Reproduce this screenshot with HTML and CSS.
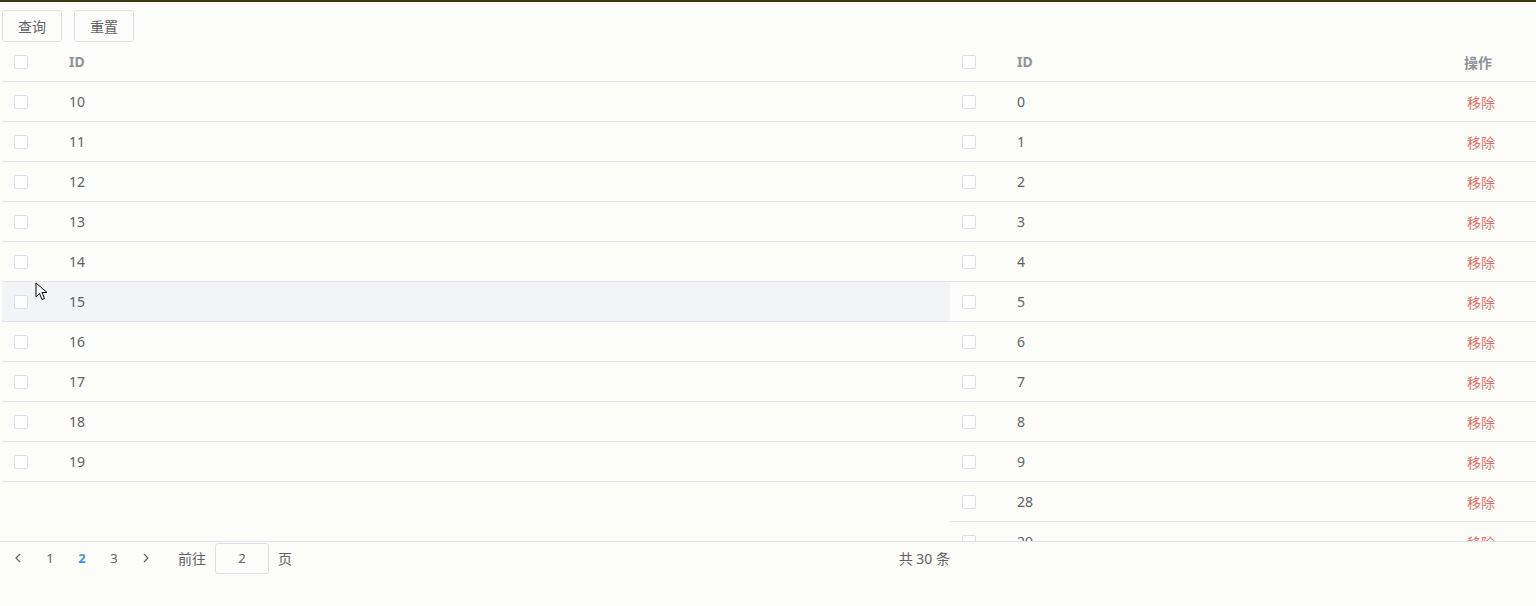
FILE: index.html
```html
<!DOCTYPE html>
<html lang="zh-CN">
<head>
    <meta charset="UTF-8">
    <meta name="viewport" content="width=device-width, initial-scale=1.0">
    <title>表格选择</title>
    <link rel="stylesheet" href="styles.css">
</head>
<body>
    <div class="toolbar">
        <button class="btn">查询</button>
        <button class="btn">重置</button>
    </div>

    <div class="panels">
        <!-- 左侧：分页数据 -->
        <div class="panel panel-left">
            <div class="row head">
                <div class="cell sel"><span class="checkbox"></span></div>
                <div class="cell id">ID</div>
            </div>
            <div class="row"><div class="cell sel"><span class="checkbox"></span></div><div class="cell id">10</div></div>
            <div class="row"><div class="cell sel"><span class="checkbox"></span></div><div class="cell id">11</div></div>
            <div class="row"><div class="cell sel"><span class="checkbox"></span></div><div class="cell id">12</div></div>
            <div class="row"><div class="cell sel"><span class="checkbox"></span></div><div class="cell id">13</div></div>
            <div class="row"><div class="cell sel"><span class="checkbox"></span></div><div class="cell id">14</div></div>
            <div class="row hover"><div class="cell sel"><span class="checkbox"></span></div><div class="cell id">15</div></div>
            <div class="row"><div class="cell sel"><span class="checkbox"></span></div><div class="cell id">16</div></div>
            <div class="row"><div class="cell sel"><span class="checkbox"></span></div><div class="cell id">17</div></div>
            <div class="row"><div class="cell sel"><span class="checkbox"></span></div><div class="cell id">18</div></div>
            <div class="row"><div class="cell sel"><span class="checkbox"></span></div><div class="cell id">19</div></div>

            <svg class="cursor" width="14" height="20" viewBox="0 0 14 20">
                <path d="M1 1 L1 15 L4.5 11.5 L7 17.5 L9.5 16.5 L7 10.5 L12 10.5 Z" fill="#fff" stroke="#000" stroke-width="1"/>
            </svg>
        </div>

        <!-- 右侧：已选数据 -->
        <div class="panel panel-right">
            <div class="row head">
                <div class="cell sel"><span class="checkbox"></span></div>
                <div class="cell id">ID</div>
                <div class="cell op">操作</div>
            </div>
            <div class="row"><div class="cell sel"><span class="checkbox"></span></div><div class="cell id">0</div><div class="cell op"><a class="remove">移除</a></div></div>
            <div class="row"><div class="cell sel"><span class="checkbox"></span></div><div class="cell id">1</div><div class="cell op"><a class="remove">移除</a></div></div>
            <div class="row"><div class="cell sel"><span class="checkbox"></span></div><div class="cell id">2</div><div class="cell op"><a class="remove">移除</a></div></div>
            <div class="row"><div class="cell sel"><span class="checkbox"></span></div><div class="cell id">3</div><div class="cell op"><a class="remove">移除</a></div></div>
            <div class="row"><div class="cell sel"><span class="checkbox"></span></div><div class="cell id">4</div><div class="cell op"><a class="remove">移除</a></div></div>
            <div class="row"><div class="cell sel"><span class="checkbox"></span></div><div class="cell id">5</div><div class="cell op"><a class="remove">移除</a></div></div>
            <div class="row"><div class="cell sel"><span class="checkbox"></span></div><div class="cell id">6</div><div class="cell op"><a class="remove">移除</a></div></div>
            <div class="row"><div class="cell sel"><span class="checkbox"></span></div><div class="cell id">7</div><div class="cell op"><a class="remove">移除</a></div></div>
            <div class="row"><div class="cell sel"><span class="checkbox"></span></div><div class="cell id">8</div><div class="cell op"><a class="remove">移除</a></div></div>
            <div class="row"><div class="cell sel"><span class="checkbox"></span></div><div class="cell id">9</div><div class="cell op"><a class="remove">移除</a></div></div>
            <div class="row"><div class="cell sel"><span class="checkbox"></span></div><div class="cell id">28</div><div class="cell op"><a class="remove">移除</a></div></div>
            <div class="row"><div class="cell sel"><span class="checkbox"></span></div><div class="cell id">29</div><div class="cell op"><a class="remove">移除</a></div></div>
        </div>
    </div>

    <div class="footer">
        <div class="pager">
            <span class="pg-btn">
                <svg width="8" height="10" viewBox="0 0 8 10"><path d="M6 1 L2 5 L6 9" fill="none" stroke="#606266" stroke-width="1.2"/></svg>
            </span>
            <span class="pg-btn">1</span>
            <span class="pg-btn active">2</span>
            <span class="pg-btn">3</span>
            <span class="pg-btn">
                <svg width="8" height="10" viewBox="0 0 8 10"><path d="M2 1 L6 5 L2 9" fill="none" stroke="#606266" stroke-width="1.2"/></svg>
            </span>
            <span class="jump">前往 <span class="jump-input">2</span> 页</span>
            <span class="total">共 30 条</span>
        </div>
    </div>
</body>
</html>
```

FILE: styles.css
```css
body {
    margin: 0;
    padding: 0;
    border-top: 2px solid #3a3916;
    background-color: #fcfcf8;
    font-family: "Noto Sans", "Noto Sans CJK SC", sans-serif;
    font-size: 14px;
    color: #606266;
}
.toolbar {
    display: flex;
    gap: 12px;
    padding: 8px 2px 0;
    height: 32px;
}
.btn {
    height: 32px;
    width: 60px;
    padding: 0;
    background-color: #fdfdfb;
    border: 1px solid #dcdfe6;
    border-radius: 3px;
    font-family: inherit;
    font-size: 14px;
    color: #606266;
}
.panels {
    display: flex;
    padding-left: 2px;
    height: 499px;
}
.panel {
    position: relative;
    overflow: hidden;
}
.panel-left {
    width: 948px;
}
.panel-right {
    flex: 1;
}
.row {
    display: flex;
    align-items: center;
    height: 39px;
    border-bottom: 1px solid #e2e2ee;
}
.row.hover {
    background-color: #f3f4f6;
}
.head {
    color: #909399;
    font-weight: bold;
}
.cell {
    padding-left: 12px;
    box-sizing: border-box;
}
.cell.sel {
    width: 55px;
    display: flex;
    align-items: center;
}
.cell.id {
    flex: 1;
}
.cell.op {
    width: 84px;
}
.checkbox {
    display: inline-block;
    width: 12px;
    height: 12px;
    border: 1px solid #dcdfe6;
    border-radius: 2px;
    background-color: #fff;
}
.remove {
    display: inline-block;
    padding-left: 3px;
    color: #e4736f;
}
.cursor {
    position: absolute;
    left: 33px;
    top: 240px;
}
.footer {
    border-top: 1px solid #e2e2ee;
    padding-left: 2px;
}
.pager {
    display: flex;
    align-items: center;
    width: 948px;
    height: 32px;
    font-size: 13px;
    color: #606266;
}
.pg-btn {
    width: 32px;
    text-align: center;
    display: flex;
    justify-content: center;
    align-items: center;
}
.pg-btn.active {
    color: #4a8fe0;
    font-weight: bold;
}
.jump {
    margin-left: 16px;
    display: flex;
    align-items: center;
    gap: 9px;
    font-size: 14px;
}
.jump-input {
    display: inline-block;
    width: 52px;
    height: 29px;
    line-height: 29px;
    border: 1px solid #dcdfe6;
    border-radius: 3px;
    text-align: center;
    background-color: #fdfdfb;
    font-size: 13px;
}
.total {
    margin-left: auto;
    font-size: 14px;
}
```
